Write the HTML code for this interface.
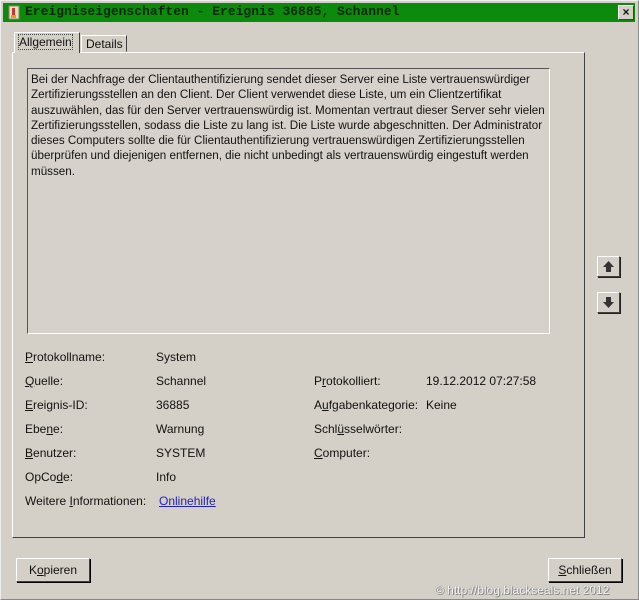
<!DOCTYPE html>
<html><head><meta charset="utf-8"><style>
*{margin:0;padding:0;box-sizing:border-box}
body{width:639px;height:600px;background:#d4d0c8;position:relative;overflow:hidden;font-family:"Liberation Sans",sans-serif;font-size:12px;color:#111}
.abs{position:absolute}
#frame{left:0;top:0;width:639px;height:600px;border:1px solid #888;border-top-color:#eee;border-left-color:#eee}
#title{left:3px;top:3px;width:632px;height:19px;background:#0b8a0b;}
#title .t{left:22px;top:1px;font-family:"Liberation Mono",monospace;font-weight:bold;font-size:13px;color:#0a2a0a;white-space:pre}
#close{left:615px;top:2px;width:16px;height:15px;background:#d4d0c8;border:1px solid;border-color:#fff #404040 #404040 #fff;font-weight:bold;font-size:12px;text-align:center;line-height:12px}
#panel{left:12px;top:52px;width:573px;height:486px;border:1px solid;border-color:#fff #404040 #404040 #fff}
.tab{height:20px;border:1px solid;border-color:#fff #404040 transparent #fff;background:#d4d0c8;padding:2px 4px;font-size:12px}
#tb{left:27px;top:68px;width:523px;height:266px;border:1px solid;border-color:#555 #fff #fff #555;background:#d6d2cb}
#txt{left:31px;top:72px;line-height:15.3px;white-space:nowrap;font-size:11.65px;letter-spacing:0}
.r{position:absolute;font-size:12px;white-space:nowrap}
.btn{border:1px solid;border-color:#fff #404040 #404040 #fff;box-shadow:1px 1px 0 #000;background:#d4d0c8;text-align:center;font-size:12px}
.ab{width:23px;height:21px;border:1px solid;border-color:#fff #404040 #404040 #fff;box-shadow:1px 1px 0 #222;background:#d4d0c8}
u{text-decoration:underline}
</style></head><body>
<div class="abs" id="frame"></div>
<div class="abs" id="title">
 <svg class="abs" style="left:5px;top:2px" width="12" height="15"><rect x="1" y="1" width="10" height="13" fill="#e8e0c0" stroke="#886"/><rect x="4" y="3" width="3" height="8" fill="#c33"/><rect x="3" y="10" width="5" height="3" fill="#d9a020"/></svg>
 <div class="abs t">Ereigniseigenschaften - Ereignis 36885, Schannel</div>
 <div class="abs" id="close">×</div>
</div>
<div class="abs" id="panel"></div>
<div class="abs tab" style="left:14px;top:32px;width:66px;height:21px;border-bottom:none;z-index:2"><span style="outline:1px dotted #444">Allgemein</span></div>
<div class="abs tab" style="left:81px;top:35px;width:46px;height:17px;padding-top:1px">Details</div>
<div class="abs" id="tb"></div>
<div class="abs" id="txt">Bei der Nachfrage der Clientauthentifizierung sendet dieser Server eine Liste vertrauenswürdiger<br>Zertifizierungsstellen an den Client. Der Client verwendet diese Liste, um ein Clientzertifikat<br>auszuwählen, das für den Server vertrauenswürdig ist. Momentan vertraut dieser Server sehr vielen<br>Zertifizierungsstellen, sodass die Liste zu lang ist. Die Liste wurde abgeschnitten. Der Administrator<br>dieses Computers sollte die für Clientauthentifizierung vertrauenswürdigen Zertifizierungsstellen<br>überprüfen und diejenigen entfernen, die nicht unbedingt als vertrauenswürdig eingestuft werden<br>müssen.</div>

<div class="r" style="left:25px;top:350px"><u>P</u>rotokollname:</div><div class="r" style="left:156px;top:350px">System</div>
<div class="r" style="left:25px;top:374px"><u>Q</u>uelle:</div><div class="r" style="left:156px;top:374px">Schannel</div>
<div class="r" style="left:314px;top:374px">P<u>r</u>otokolliert:</div><div class="r" style="left:426px;top:374px">19.12.2012 07:27:58</div>
<div class="r" style="left:25px;top:398px"><u>E</u>reignis-ID:</div><div class="r" style="left:156px;top:398px">36885</div>
<div class="r" style="left:314px;top:398px">A<u>u</u>fgabenkategorie:</div><div class="r" style="left:426px;top:398px">Keine</div>
<div class="r" style="left:25px;top:422px">Ebe<u>n</u>e:</div><div class="r" style="left:156px;top:422px">Warnung</div>
<div class="r" style="left:314px;top:422px">Schl<u>ü</u>sselwörter:</div>
<div class="r" style="left:25px;top:446px"><u>B</u>enutzer:</div><div class="r" style="left:156px;top:446px">SYSTEM</div>
<div class="r" style="left:314px;top:446px"><u>C</u>omputer:</div>
<div class="r" style="left:25px;top:470px">OpCo<u>d</u>e:</div><div class="r" style="left:156px;top:470px">Info</div>
<div class="r" style="left:25px;top:494px">Weitere <u>I</u>nformationen:</div><div class="r" style="left:159px;top:494px;color:#2222bb;text-decoration:underline">Onlinehilfe</div>

<div class="abs ab" style="left:597px;top:256px"><svg width="21" height="19"><path d="M10.5 4 L16 10 H13 V15 H8 V10 H5 Z" fill="#333"/></svg></div>
<div class="abs ab" style="left:597px;top:292px"><svg width="21" height="19"><path d="M10.5 15 L16 9 H13 V4 H8 V9 H5 Z" fill="#333"/></svg></div>

<div class="abs btn" style="left:16px;top:558px;width:74px;height:24px;line-height:22px">K<u>o</u>pieren</div>
<div class="abs btn" style="left:548px;top:558px;width:74px;height:24px;line-height:22px"><u>S</u>chließen</div>
<div class="abs" style="left:435px;top:583px;font-size:12px;color:#f4f4f4;text-shadow:0 0 1px #777,1px 1px 0 #888">© http://blog.blackseals.net 2012</div>
</body></html>
